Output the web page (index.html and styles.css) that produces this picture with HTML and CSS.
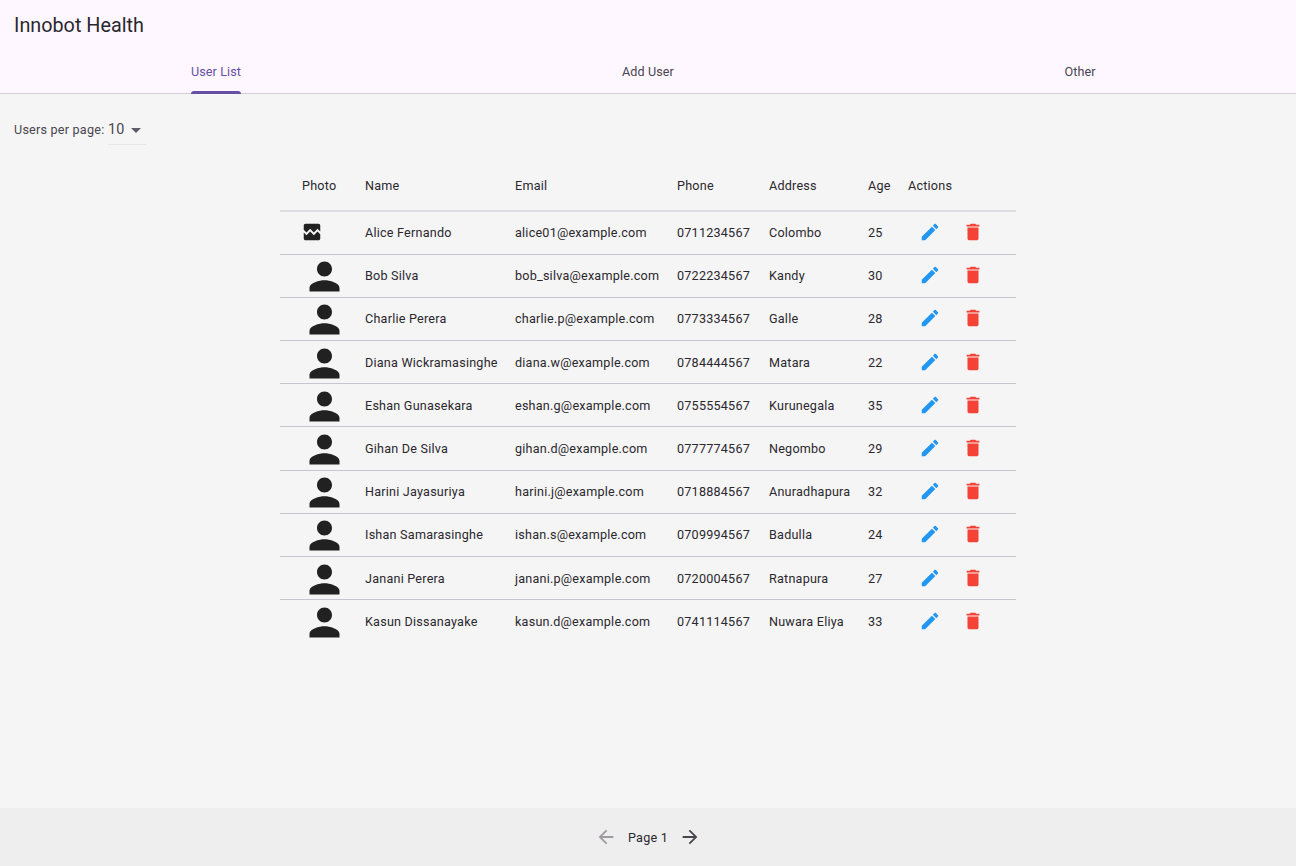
FILE: index.html
```html
<!DOCTYPE html>
<html lang="en">
<head>
  <meta charset="UTF-8">
  <meta name="viewport" content="width=device-width, initial-scale=1.0">
  <title>Innobot Health</title>
  <link rel="stylesheet" href="styles.css">
</head>
<body>
  <svg class="icon-defs" aria-hidden="true">
    <symbol id="i-person" viewBox="0 0 24 24"><path d="M12 12c2.21 0 4-1.79 4-4s-1.79-4-4-4-4 1.79-4 4 1.79 4 4 4zm0 2c-2.67 0-8 1.34-8 4v2h16v-2c0-2.66-5.33-4-8-4z"/></symbol>
    <symbol id="i-broken" viewBox="0 0 24 24"><path d="M21 5v6.59l-3-3.01-4 4.01-4-4-4 4-3-3.01V5c0-1.1.9-2 2-2h14c1.1 0 2 .9 2 2zm-3 6.42l3 3.01V19c0 1.1-.9 2-2 2H5c-1.1 0-2-.9-2-2v-6.58l3 2.99 4-4 4 4 4-3.99z"/></symbol>
    <symbol id="i-edit" viewBox="0 0 24 24"><path d="M3 17.25V21h3.75L17.81 9.94l-3.75-3.75L3 17.25zM20.71 7.04c.39-.39.39-1.02 0-1.41l-2.34-2.34c-.39-.39-1.02-.39-1.41 0l-1.83 1.83 3.75 3.75 1.83-1.83z"/></symbol>
    <symbol id="i-delete" viewBox="0 0 24 24"><path d="M6 19c0 1.1.9 2 2 2h8c1.1 0 2-.9 2-2V7H6v12zM19 4h-3.5l-1-1h-5l-1 1H5v2h14V4z"/></symbol>
    <symbol id="i-back" viewBox="0 0 24 24"><path d="M20 11H7.83l5.59-5.59L12 4l-8 8 8 8 1.41-1.41L7.83 13H20v-2z"/></symbol>
    <symbol id="i-next" viewBox="0 0 24 24"><path d="M12 4l-1.41 1.41L16.17 11H4v2h12.17l-5.58 5.59L12 20l8-8z"/></symbol>
  </svg>

  <header class="app-header">
    <h1 class="app-title">Innobot Health</h1>
    <nav class="tabs">
      <div class="tab tab-active"><span class="tab-label">User List</span></div>
      <div class="tab"><span class="tab-label">Add User</span></div>
      <div class="tab"><span class="tab-label">Other</span></div>
    </nav>
  </header>

  <main class="content">
    <div class="per-page">
      <span class="per-page-label">Users per page:</span>
      <div class="dropdown">
        <span class="dropdown-value">10</span>
        <span class="dropdown-arrow"></span>
      </div>
    </div>

    <table class="user-table">
      <colgroup>
        <col class="col-photo">
        <col class="col-name">
        <col class="col-email">
        <col class="col-phone">
        <col class="col-address">
        <col class="col-age">
        <col class="col-actions">
      </colgroup>
      <thead>
        <tr>
          <th class="photo-head">Photo</th>
          <th>Name</th>
          <th>Email</th>
          <th>Phone</th>
          <th>Address</th>
          <th>Age</th>
          <th>Actions</th>
        </tr>
      </thead>
      <tbody>
        <tr>
          <td><svg class="broken-icon"><use href="#i-broken"/></svg></td>
          <td>Alice Fernando</td>
          <td>alice01@example.com</td>
          <td>0711234567</td>
          <td>Colombo</td>
          <td>25</td>
          <td><div class="actions"><svg class="edit-icon"><use href="#i-edit"/></svg><svg class="delete-icon"><use href="#i-delete"/></svg></div></td>
        </tr>
        <tr>
          <td><svg class="person-icon"><use href="#i-person"/></svg></td>
          <td>Bob Silva</td>
          <td>bob_silva@example.com</td>
          <td>0722234567</td>
          <td>Kandy</td>
          <td>30</td>
          <td><div class="actions"><svg class="edit-icon"><use href="#i-edit"/></svg><svg class="delete-icon"><use href="#i-delete"/></svg></div></td>
        </tr>
        <tr>
          <td><svg class="person-icon"><use href="#i-person"/></svg></td>
          <td>Charlie Perera</td>
          <td>charlie.p@example.com</td>
          <td>0773334567</td>
          <td>Galle</td>
          <td>28</td>
          <td><div class="actions"><svg class="edit-icon"><use href="#i-edit"/></svg><svg class="delete-icon"><use href="#i-delete"/></svg></div></td>
        </tr>
        <tr>
          <td><svg class="person-icon"><use href="#i-person"/></svg></td>
          <td>Diana Wickramasinghe</td>
          <td>diana.w@example.com</td>
          <td>0784444567</td>
          <td>Matara</td>
          <td>22</td>
          <td><div class="actions"><svg class="edit-icon"><use href="#i-edit"/></svg><svg class="delete-icon"><use href="#i-delete"/></svg></div></td>
        </tr>
        <tr>
          <td><svg class="person-icon"><use href="#i-person"/></svg></td>
          <td>Eshan Gunasekara</td>
          <td>eshan.g@example.com</td>
          <td>0755554567</td>
          <td>Kurunegala</td>
          <td>35</td>
          <td><div class="actions"><svg class="edit-icon"><use href="#i-edit"/></svg><svg class="delete-icon"><use href="#i-delete"/></svg></div></td>
        </tr>
        <tr>
          <td><svg class="person-icon"><use href="#i-person"/></svg></td>
          <td>Gihan De Silva</td>
          <td>gihan.d@example.com</td>
          <td>0777774567</td>
          <td>Negombo</td>
          <td>29</td>
          <td><div class="actions"><svg class="edit-icon"><use href="#i-edit"/></svg><svg class="delete-icon"><use href="#i-delete"/></svg></div></td>
        </tr>
        <tr>
          <td><svg class="person-icon"><use href="#i-person"/></svg></td>
          <td>Harini Jayasuriya</td>
          <td>harini.j@example.com</td>
          <td>0718884567</td>
          <td>Anuradhapura</td>
          <td>32</td>
          <td><div class="actions"><svg class="edit-icon"><use href="#i-edit"/></svg><svg class="delete-icon"><use href="#i-delete"/></svg></div></td>
        </tr>
        <tr>
          <td><svg class="person-icon"><use href="#i-person"/></svg></td>
          <td>Ishan Samarasinghe</td>
          <td>ishan.s@example.com</td>
          <td>0709994567</td>
          <td>Badulla</td>
          <td>24</td>
          <td><div class="actions"><svg class="edit-icon"><use href="#i-edit"/></svg><svg class="delete-icon"><use href="#i-delete"/></svg></div></td>
        </tr>
        <tr>
          <td><svg class="person-icon"><use href="#i-person"/></svg></td>
          <td>Janani Perera</td>
          <td>janani.p@example.com</td>
          <td>0720004567</td>
          <td>Ratnapura</td>
          <td>27</td>
          <td><div class="actions"><svg class="edit-icon"><use href="#i-edit"/></svg><svg class="delete-icon"><use href="#i-delete"/></svg></div></td>
        </tr>
        <tr>
          <td><svg class="person-icon"><use href="#i-person"/></svg></td>
          <td>Kasun Dissanayake</td>
          <td>kasun.d@example.com</td>
          <td>0741114567</td>
          <td>Nuwara Eliya</td>
          <td>33</td>
          <td><div class="actions"><svg class="edit-icon"><use href="#i-edit"/></svg><svg class="delete-icon"><use href="#i-delete"/></svg></div></td>
        </tr>
      </tbody>
    </table>
  </main>

  <footer class="pager">
    <svg class="pager-icon pager-disabled"><use href="#i-back"/></svg>
    <span class="pager-label">Page 1</span>
    <svg class="pager-icon"><use href="#i-next"/></svg>
  </footer>
</body>
</html>
```

FILE: styles.css
```css
* {
  box-sizing: border-box;
}
html, body {
  height: 100%;
}
body {
  margin: 0;
  display: flex;
  flex-direction: column;
  font-family: Roboto, "Liberation Sans", sans-serif;
  font-size: 12.6px;
  letter-spacing: 0.22px;
  color: #2a282e;
  background-color: #f5f5f5;
}
svg {
  display: block;
  fill: currentColor;
}
.icon-defs {
  display: none;
}

/* Header and tabs */
.app-header {
  background-color: #fef7ff;
  border-bottom: 1px solid #d3cfd8;
}
.app-title {
  margin: 0;
  height: 48px;
  padding: 14px 14px 0;
  font-size: 19.8px;
  line-height: 23px;
  font-weight: 400;
  letter-spacing: 0;
}
.tabs {
  display: grid;
  grid-template-columns: repeat(3, 1fr);
  height: 45px;
}
.tab {
  display: flex;
  justify-content: center;
  color: #49454f;
}
.tab-label {
  position: relative;
  height: 45px;
  padding-top: 16px;
  line-height: 15px;
  letter-spacing: 0.09px;
}
.tab-active .tab-label {
  color: #6750a4;
}
.tab-active .tab-label::after {
  content: "";
  position: absolute;
  left: 0;
  right: 0;
  bottom: -1px;
  height: 3px;
  background-color: #6750a4;
  border-radius: 3px 3px 0 0;
}

/* Users per page */
.content {
  flex: 1;
}
.per-page {
  display: flex;
  align-items: flex-start;
  height: 68px;
  padding: 22px 14px 0;
}
.per-page-label {
  margin-top: 6px;
  margin-right: 3.5px;
  line-height: 15px;
  color: #49454f;
}
.dropdown {
  display: flex;
  width: 38px;
  height: 29px;
  padding-top: 5px;
  border-bottom: 1px solid #e6e6e6;
}
.dropdown-value {
  font-size: 14.4px;
  line-height: 17px;
  color: #49454f;
}
.dropdown-arrow {
  width: 0;
  height: 0;
  margin: 7px 0 0 6px;
  border-left: 5px solid transparent;
  border-right: 5px solid transparent;
  border-top: 5px solid #5f5b64;
}

/* User table */
.user-table {
  width: 736px;
  margin: 0 auto;
  border-collapse: collapse;
  table-layout: fixed;
}
.col-photo { width: 85px; }
.col-name { width: 150px; }
.col-email { width: 162px; }
.col-phone { width: 92px; }
.col-address { width: 99px; }
.col-age { width: 40px; }
.col-actions { width: 108px; }

.user-table th {
  height: 49px;
  padding: 0 0 1px;
  text-align: left;
  font-weight: 400;
  border-bottom: 2px solid #dedde3;
}
.user-table .photo-head {
  padding-left: 22px;
}
.user-table td {
  height: 43.2px;
  padding: 0;
  white-space: nowrap;
  border-bottom: 1px solid #cac4d0;
}
.user-table tbody tr:last-child td {
  border-bottom: none;
}
.person-icon {
  width: 45px;
  height: 45px;
  margin: -1px 0 -3px 21.5px;
  color: #212121;
}
.broken-icon {
  width: 22px;
  height: 22px;
  margin: 0 0 1px 21px;
  color: #212121;
}
.actions {
  display: flex;
  gap: 21px;
  padding: 0 0 1px 11px;
}
.edit-icon {
  width: 22px;
  height: 22px;
  color: #2196f3;
}
.delete-icon {
  width: 22px;
  height: 22px;
  color: #f44336;
}

/* Bottom pager */
.pager {
  display: flex;
  justify-content: center;
  align-items: center;
  height: 58px;
  background-color: #eeeeee;
}
.pager-icon {
  width: 22px;
  height: 22px;
  color: #49454f;
}
.pager-disabled {
  color: #9d9ba0;
}
.pager-label {
  margin: 0 11px;
}
```
